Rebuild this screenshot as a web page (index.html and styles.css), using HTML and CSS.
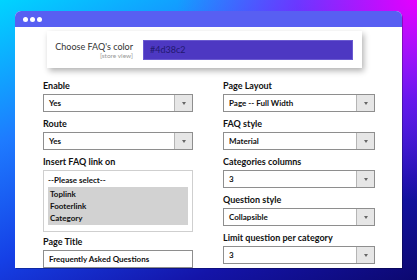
FILE: index.html
```html
<!DOCTYPE html>
<html lang="en">
<head>
  <meta charset="UTF-8">
  <meta name="viewport" content="width=device-width, initial-scale=1.0">
  <title>FAQ Settings</title>
  <link rel="stylesheet" href="styles.css">
</head>
<body>
  <div class="window">
    <!-- title bar with three dots -->
    <div class="titlebar">
      <span class="dot"></span>
      <span class="dot"></span>
      <span class="dot"></span>
    </div>

    <div class="content">
      <!-- floating color picker card -->
      <div class="color-card">
        <div class="color-label">
          <div class="color-title">Choose FAQ's color</div>
          <div class="scope">[store view]</div>
        </div>
        <div class="color-input">#4d38c2</div>
      </div>

      <div class="columns">
        <div class="column">
          <div class="field">
            <div class="label">Enable</div>
            <div class="select"><span class="value">Yes</span><span class="arrow"></span></div>
          </div>
          <div class="field">
            <div class="label">Route</div>
            <div class="select"><span class="value">Yes</span><span class="arrow"></span></div>
          </div>
          <div class="field field-tight">
            <div class="label">Insert FAQ link on</div>
            <div class="multi">
              <div class="placeholder">--Please select--</div>
              <div class="options">
                <div>Toplink</div>
                <div>Footerlink</div>
                <div>Category</div>
              </div>
            </div>
          </div>
          <div class="field">
            <div class="label">Page Title</div>
            <div class="text-input">Frequently Asked Questions</div>
          </div>
        </div>

        <div class="column">
          <div class="field">
            <div class="label">Page Layout</div>
            <div class="select"><span class="value">Page -- Full Width</span><span class="arrow"></span></div>
          </div>
          <div class="field">
            <div class="label">FAQ style</div>
            <div class="select"><span class="value">Material</span><span class="arrow"></span></div>
          </div>
          <div class="field">
            <div class="label">Categories columns</div>
            <div class="select"><span class="value">3</span><span class="arrow"></span></div>
          </div>
          <div class="field">
            <div class="label">Question style</div>
            <div class="select"><span class="value">Collapsible</span><span class="arrow"></span></div>
          </div>
          <div class="field field-last">
            <div class="label">Limit question per category</div>
            <div class="select"><span class="value">3</span><span class="arrow"></span></div>
          </div>
        </div>
      </div>
    </div>
  </div>
</body>
</html>
```

FILE: styles.css
```css
body {
  margin: 0;
  width: 417px;
  height: 280px;
  overflow: hidden;
  padding: 11px 0 0 15px;
  box-sizing: border-box;
  font-family: Lato, "Open Sans", sans-serif;
  color: #111;
  background:
    radial-gradient(ellipse 240px 200px at 100% 0%, rgba(230, 0, 255, 1) 0%, rgba(170, 0, 255, 0.55) 50%, rgba(130, 0, 255, 0) 100%),
    linear-gradient(155deg, #00d4ff 0%, #1e7bff 30%, #1540e6 55%, #1414a8 78%, #0c0870 100%);
}
/* window frame */
.window {
  width: 387px;
  height: 257px;
  background: #fff;
  border-radius: 6px 6px 0 0;
  overflow: hidden;
  box-shadow: 1px 1px 0 rgba(0, 0, 0, 0.25);
}
.titlebar {
  height: 16px;
  background: #585ff2;
  display: flex;
  align-items: center;
  gap: 2px;
  padding-left: 8px;
}
.dot {
  width: 5px;
  height: 5px;
  border-radius: 50%;
  background: #fff;
}
.content {
  padding: 4px 0 0 28px;
}
/* color card */
.color-card {
  margin-left: 4px;
  width: 315px;
  height: 37px;
  box-sizing: border-box;
  background: #fff;
  box-shadow: 2px 3px 6px rgba(0, 0, 0, 0.3);
  display: flex;
  align-items: center;
  gap: 10px;
}
.color-label {
  width: 86px;
  text-align: right;
  margin-top: 2px;
}
.color-title {
  font-size: 9px;
  color: #333;
  line-height: 11px;
}
.scope {
  font-size: 6.5px;
  color: #999;
  line-height: 8px;
}
.color-input {
  width: 210px;
  height: 20px;
  box-sizing: border-box;
  background: #4d38c2;
  border: 1px solid #6a5ad0;
  color: #221870;
  font-size: 9px;
  line-height: 18px;
  padding-left: 6px;
}
/* form columns */
.columns {
  display: grid;
  grid-template-columns: 150px 152px;
  column-gap: 30px;
  margin-top: 12px;
}
.field {
  margin-bottom: 6px;
}
.field-tight {
  margin-bottom: 4px;
}
.label {
  font-size: 9px;
  font-weight: 700;
  line-height: 12px;
  margin-bottom: 2px;
  color: #111;
}
.field-last .label {
  margin-top: 2px;
}
.select, .text-input {
  height: 18px;
  box-sizing: border-box;
  border: 1px solid #8e8e8e;
  display: flex;
  align-items: center;
  font-size: 8px;
  font-weight: 700;
}
.value, .text-input {
  padding-left: 5px;
}
.value {
  flex: 1;
}
.arrow {
  width: 17px;
  height: 100%;
  background: #e6e6e6;
  border-left: 1px solid #b5b5b5;
  display: flex;
  align-items: center;
  justify-content: center;
}
.arrow::after {
  content: "";
  border-left: 2.5px solid transparent;
  border-right: 2.5px solid transparent;
  border-top: 3px solid #666;
}
.multi {
  height: 62px;
  box-sizing: border-box;
  border: 1px solid #cfcfcf;
  padding: 3px 4px 0 4px;
  font-size: 8px;
  font-weight: 700;
}
.placeholder {
  line-height: 12px;
  margin-bottom: 1px;
}
.options {
  background: #d2d2d2;
  padding: 0 2px;
  line-height: 12px;
  height: 38px;
  box-sizing: border-box;
  padding-top: 1px;
}
```
